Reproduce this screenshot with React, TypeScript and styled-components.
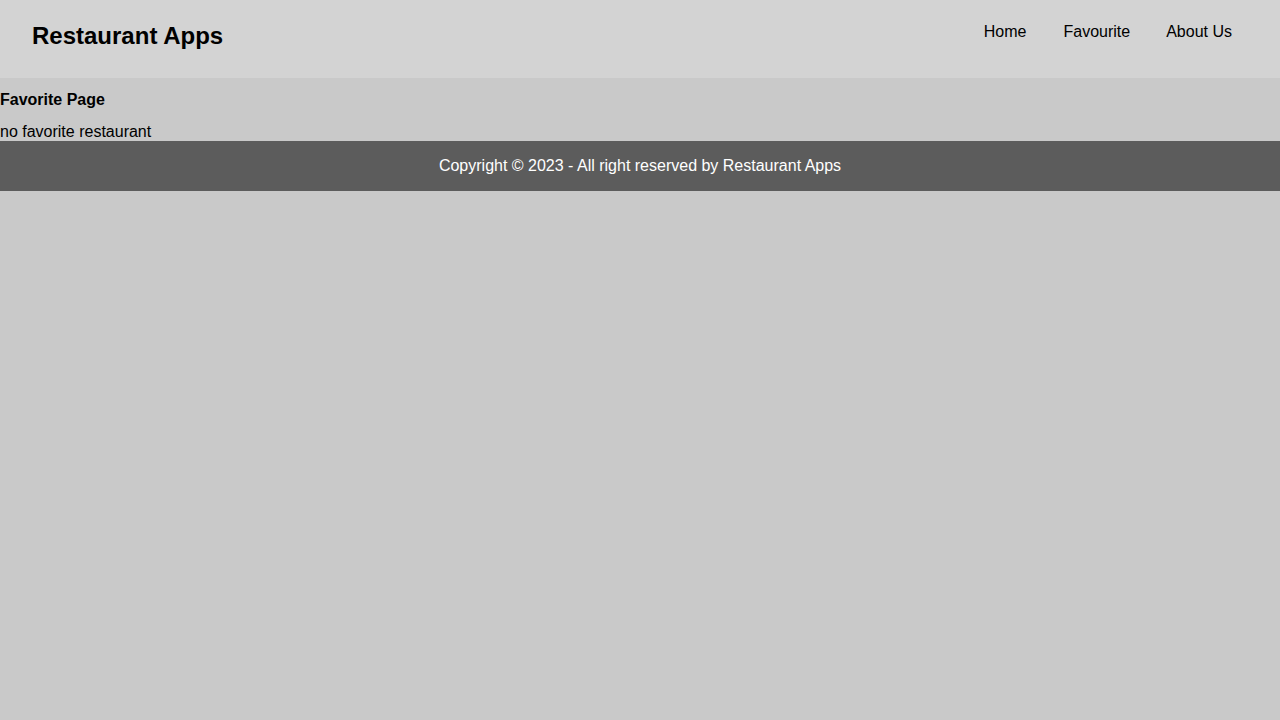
import React from "react";
import styled, { createGlobalStyle } from "styled-components";

const GlobalStyle = createGlobalStyle`
  html, body {
    margin: 0;
    padding: 0;
    background: #c9c9c9;
    font-family: "Liberation Sans", Arial, sans-serif;
    color: #000;
  }
  * { box-sizing: border-box; }
`;

const Header = styled.header`
  display: flex;
  justify-content: space-between;
  align-items: flex-start;
  height: 78px;
  padding: 22px 30px 0 32px;
  background: #d3d3d3;
`;

const Title = styled.h1`
  margin: 0;
  font-size: 24px;
  font-weight: bold;
  line-height: 27px;
`;

const Nav = styled.nav`
  display: flex;
  margin-top: 1px;
`;

const NavLink = styled.a`
  padding: 0 18px;
  font-size: 16px;
  line-height: 18px;
  color: #000;
  text-decoration: none;
  &:first-child {
    padding-right: 19px;
  }
`;

const Main = styled.main`
  padding-top: 13px;
`;

const Heading = styled.h2`
  margin: 0 0 13px;
  font-size: 16px;
  font-weight: bold;
  line-height: 18px;
`;

const Empty = styled.p`
  margin: 0;
  font-size: 16px;
  line-height: 19px;
`;

const Footer = styled.footer`
  display: flex;
  align-items: center;
  justify-content: center;
  height: 50px;
  background: #5c5c5c;
  color: #fff;
  font-size: 16px;
`;

export default function App() {
  return (
    <>
      <GlobalStyle />
      <Header>
        <Title>Restaurant Apps</Title>
        <Nav>
          <NavLink href="#">Home</NavLink>
          <NavLink href="#">Favourite</NavLink>
          <NavLink href="#">About Us</NavLink>
        </Nav>
      </Header>
      <Main>
        <Heading>Favorite Page</Heading>
        <Empty>no favorite restaurant</Empty>
      </Main>
      <Footer>Copyright © 2023 - All right reserved by Restaurant Apps</Footer>
    </>
  );
}
